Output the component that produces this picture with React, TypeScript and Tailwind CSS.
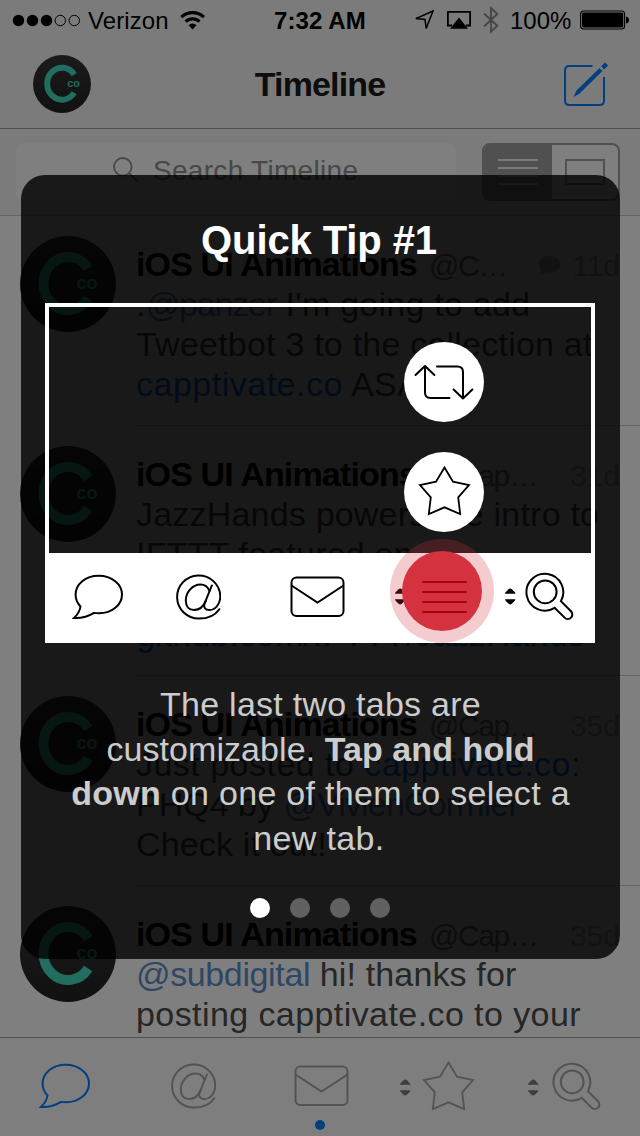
import type { ReactNode } from "react";

function Avatar({ className }: { className: string }) {
  return (
    <svg viewBox="0 0 96 96" className={className}>
      <defs>
        <linearGradient id="disc" x1="0" y1="0" x2="0" y2="1">
          <stop offset="0" stopColor="#363636" />
          <stop offset="1" stopColor="#222222" />
        </linearGradient>
      </defs>
      <circle cx="48" cy="48" r="48" fill="url(#disc)" />
      <path d="M68.2 32.5A24.5 26.5 0 1 0 68.2 62.5" fill="none" stroke="#42dabe" strokeWidth="9.8" />
      <text x="56.5" y="52.6" fontSize="18" fontWeight="700" fill="#42dabe" className="font-['Liberation_Sans']">
        co
      </text>
    </svg>
  );
}

function CommentIcon() {
  return (
    <svg width="52" height="46" fill="none" stroke="currentColor" strokeWidth="2">
      <path d="M8.5 32.5C5.4 29.2 3.6 25 3.6 20.7C3.6 10 13.5 1.7 26.6 1.7S50 10 50 20.5S40 39.3 27 39.3C25 39.3 23.5 39.3 22 38.9C17 42 10 44.4 2 44C5 41 8 37 8.5 32.5Z" />
    </svg>
  );
}

function AtIcon() {
  return (
    <svg width="45" height="46" fill="none" stroke="currentColor" strokeWidth="2" strokeLinecap="round">
      <path d="M43.3 35.2C39 41.5 31.5 44.6 23 44.6A21.6 21.6 0 1 1 44.3 22C44.3 30 39.5 36 33.5 36C29 36 27.3 33 28.6 29.5L35.8 11.5" />
      <path d="M33.6 17C31.5 12 28.5 10.5 24.5 10.5C16 10.5 9.8 19 9.8 26.5C9.8 32.5 13 36 18 36C23 36 27.5 32.5 30 26.5" />
    </svg>
  );
}

function MailIcon() {
  return (
    <svg width="55" height="42" fill="none" stroke="currentColor" strokeWidth="2">
      <rect x="1.5" y="1.5" width="52" height="38.4" rx="5" />
      <path d="M1.5 9.5L27.5 26.5L53.5 9.5" />
    </svg>
  );
}

function StarIcon() {
  return (
    <svg width="53" height="53" fill="none" stroke="currentColor" strokeWidth="1.8">
      <path d="M26.5 3.5L35 17.7L51 21L40.2 33.4L42.2 50L26.5 43.3L10.8 50L12.8 33.4L2 21L18 17.7Z" />
    </svg>
  );
}

function LensIcon() {
  return (
    <svg width="49" height="50" fill="none" stroke="currentColor" strokeWidth="2">
      <path d="M29.6 35.8A18.4 18.4 0 1 1 35.9 29.2L46 39.2a4.5 4.5 0 0 1-6.4 6.4Z" />
      <circle cx="20.2" cy="19.8" r="11.4" />
    </svg>
  );
}

function Stepper() {
  return (
    <svg width="11" height="17" fill="currentColor">
      <path d="M0 5.7Q0 4.8 0.8 4L3.6 1.2Q5.2 -0.3 6.8 1.2L9.6 4Q10.4 4.8 10.4 5.7Z" />
      <path d="M0 11.2Q0 12.100 0.8 12.900L3.6 15.700Q5.2 17.200 6.8 15.700L9.6 12.900Q10.4 12.100 10.4 11.200Z" />
    </svg>
  );
}

function StatusBar() {
  return (
    <div className="flex h-10 items-center text-[24px] text-black">
      <svg width="88" height="40" className="shrink-0">
        <g fill="currentColor">
          <circle cx="18.5" cy="20.5" r="5.7" />
          <circle cx="32.5" cy="20.5" r="5.7" />
          <circle cx="46.5" cy="20.5" r="5.7" />
        </g>
        <g fill="none" stroke="currentColor">
          <circle cx="60.3" cy="20.5" r="5.2" />
          <circle cx="74.3" cy="20.5" r="5.2" />
        </g>
      </svg>
      <span className="w-[92px] shrink-0 pt-[2px] whitespace-nowrap tracking-[0.1px]">Verizon</span>
      <svg width="26" height="20" className="mr-[68px] shrink-0" fill="none" stroke="currentColor" strokeWidth="3.2">
        <path d="M1.3 7.2A16.5 16.5 0 0 1 23.9 7.2" />
        <path d="M5.7 11.7A10 10 0 0 1 19.5 11.7" />
        <path d="M12.6 19.4L8.6 15.2A5.8 5.8 0 0 1 16.6 15.2Z" fill="currentColor" stroke="none" />
      </svg>
      <span className="w-[140px] shrink-0 pt-[2px] whitespace-nowrap font-bold tracking-[0.1px]">7:32 AM</span>
      <svg width="22" height="22" className="mr-[10px] shrink-0" fill="none" stroke="currentColor" strokeWidth="1.5">
        <path d="M19 2L1.8 9.6L11 10.4L12.2 19.5Z" strokeLinejoin="miter" />
      </svg>
      <svg width="26" height="20" className="mr-[11px] shrink-0">
        <path d="M6 15.5H1.9V1.9H24.1V15.5H20" fill="none" stroke="currentColor" strokeWidth="1.8" />
        <path d="M13 7.5L22 18.8H4Z" fill="currentColor" />
      </svg>
      <svg width="17" height="28" className="mr-[10px] shrink-0 text-[#8c8c8c]" fill="none" stroke="currentColor" strokeWidth="1.9">
        <path d="M1 7.5L14.3 19.8L8 25.5V2L14.3 8L1 20.5" />
      </svg>
      <span className="w-[70px] shrink-0 pt-[2px] whitespace-nowrap">100%</span>
      <svg width="50" height="20" className="shrink-0">
        <rect x="0.6" y="1" width="44" height="18" rx="3" fill="none" stroke="currentColor" strokeWidth="1.1" />
        <rect x="2" y="2.5" width="41.2" height="15" rx="1.4" fill="currentColor" />
        <path d="M46 6.5Q49 7 49 10T46 13.5Z" fill="currentColor" />
      </svg>
    </div>
  );
}

function NavBar() {
  return (
    <div className="grid h-[89px] grid-cols-[1fr_auto_1fr] items-center border-b border-[#a0a0a0]">
      <Avatar className="mb-px ml-[33px] h-[58px] w-[58px]" />
      <h1 className="pt-px text-[34px] font-bold tracking-[-0.85px] text-[#1a1a1a]">Timeline</h1>
      <svg width="46" height="46" className="mr-[31px] justify-self-end text-[#0080ff]" fill="none" stroke="currentColor" strokeWidth="2">
        <path d="M29.500 5H6.500Q2 5 2 9.500V39.500Q2 44 6.500 44H36.500Q41 44 41 39.500V16" />
        <path d="M15 31L38 8.500" strokeWidth="4.200" />
        <path d="M16.800 32.600L10.500 36L13.600 29.200Z" fill="currentColor" stroke="none" />
        <path d="M39.600 6.900L43.600 3" strokeWidth="4.400" />
      </svg>
    </div>
  );
}

function SearchRow() {
  return (
    <div className="flex h-[87px] items-start border-b border-[#c8c8c8] pt-[14px] pl-4">
      <div className="flex h-[58px] w-[440px] items-center rounded-lg bg-white pl-[97px] text-[28px] tracking-[0.3px] text-[#8e8e93]">
        <svg width="26" height="26" className="mr-[14px] mb-1" fill="none" stroke="currentColor" strokeWidth="1.8">
          <circle cx="9.8" cy="9.8" r="8.8" />
          <path d="M16 16L24.500 24.500" />
        </svg>
        <span className="pb-[2px]">Search Timeline</span>
      </div>
      <div className="ml-[26px] flex h-[58px] w-[138px] overflow-hidden rounded-lg border-2 border-[#a0a0a0] bg-white">
        <div className="flex w-[68px] items-center justify-center bg-[#a0a0a0]">
          <svg width="40" height="26" stroke="#f4f4f4" strokeWidth="2">
            <path d="M0 1H40M0 9H40M0 17H40M0 25H40" />
          </svg>
        </div>
        <div className="flex flex-1 items-center justify-center">
          <div className="h-[26px] w-10 border-2 border-[#a0a0a0]" />
        </div>
      </div>
    </div>
  );
}

function Tweet({ handle, age, reply, children, last }: { handle: string; age: string; reply?: boolean; children: ReactNode; last?: boolean }) {
  return (
    <article className="flex pl-5">
      <Avatar className="mt-5 h-24 w-24 shrink-0" />
      <div className={`ml-5 flex-1 whitespace-nowrap pt-7 text-[34px] leading-10 text-[#4c4c4c] ${last ? "" : "border-b border-[#c8c8c8] pb-[21px]"}`}>
        <div className="flex h-10 items-baseline text-[30px] text-[#7a7a7a]">
          <span className="w-[293px] text-[34px] font-bold tracking-[-0.85px] text-black">iOS UI Animations</span>
          <span className="tracking-[-1.4px]">{handle}</span>
          <span className="mr-5 ml-auto flex items-baseline text-[#b4b4b4]">
            {reply && (
              <svg width="23" height="21" className="mr-[11px]" fill="currentColor">
                <path d="M12 1C18 1 22.500 4.500 22.500 9.200S18 17.600 12 17.600Q10 17.600 8.500 17.200Q5 20.200 0.500 20Q3 18 3.300 14.700Q1 12.500 1 9.200C1 4.500 6 1 12 1Z" />
              </svg>
            )}
            {age}
          </span>
        </div>
        {children}
      </div>
    </article>
  );
}

function Timeline() {
  return (
    <main className="h-[821px] overflow-hidden bg-white">
      <Tweet handle="@C…" age="11d" reply>
        <div className="tracking-[0.25px]">
          .<span className="tracking-[-1.2px] text-[#5c8fc8]">@panzer</span> I'm going to add
        </div>
        <div className="tracking-[0.22px]">Tweetbot 3 to the collection at</div>
        <div className="tracking-[0.5px]">
          <span className="text-[#007aff]">capptivate.co</span> ASAP!
        </div>
      </Tweet>
      <Tweet handle="@Cap…" age="31d">
        <div className="tracking-[0.2px]">JazzHands powers the intro to</div>
        <div className="tracking-[0.2px]">IFTTT featured on</div>
        <div className="h-10" />
        <div className="tracking-[0.1px] text-[#007aff]">github.com/IFTTT/JazzHands</div>
      </Tweet>
      <Tweet handle="@Cap…" age="35d">
        <div className="tracking-[0.48px]">
          Just posted to <span className="text-[#007aff]">capptivate.co</span>:
        </div>
        <div>
          PHQ4 by <span className="tracking-[-0.85px] text-[#5c8fc8]">@VivienCormier</span>
        </div>
        <div className="tracking-[0.15px]">Check it out!</div>
      </Tweet>
      <Tweet handle="@Cap…" age="35d" last>
        <div className="tracking-[0.15px]">
          <span className="tracking-[-0.37px] text-[#5c8fc8]">@subdigital</span> hi! thanks for
        </div>
        <div className="tracking-[0.42px]">posting capptivate.co to your</div>
      </Tweet>
    </main>
  );
}

function TabBar() {
  return (
    <nav className="grid h-[99px] grid-cols-5 items-start border-t border-[#a0a0a0] bg-[#fcfcfc] text-[#a6a6a6]">
      <div className="flex justify-center pt-[25px] pl-[2px] text-[#0080ff]">
        <CommentIcon />
      </div>
      <div className="flex justify-center pt-[25px] pl-[3px]">
        <AtIcon />
      </div>
      <div className="flex flex-col items-center pt-[27px]">
        <div className="pl-[2px]">
          <MailIcon />
        </div>
        <span className="mt-[13px] h-[10px] w-[10px] rounded-full bg-[#0080ff]" />
      </div>
      <div className="grid grid-cols-[1fr_auto_1fr] pt-[21px]">
        <div className="mt-5 mr-[11px] justify-self-end text-[#7a7a7a]">
          <Stepper />
        </div>
        <StarIcon />
      </div>
      <div className="grid grid-cols-[1fr_auto_1fr] pt-[24px]">
        <div className="mt-[17px] mr-[13px] justify-self-end text-[#7a7a7a]">
          <Stepper />
        </div>
        <LensIcon />
      </div>
    </nav>
  );
}

function TabPicker() {
  return (
    <div className="relative ml-6 flex h-[340px] w-[550px] flex-col">
      <div className="flex flex-1 flex-col gap-[30px] border-x-4 border-t-4 border-white pt-[35px] pl-[355px]">
        <div className="flex h-20 w-20 items-center justify-center rounded-full bg-white">
          <svg width="60" height="37" fill="none" stroke="#000" strokeWidth="2" strokeLinecap="round" strokeLinejoin="round">
            <path d="M1.500 11L11 2L20.400 11M11 2V28.500Q11 34 16.500 34H35.500" />
            <path d="M23 2.500H43.500Q49 2.500 49 8V34.500M39.600 25.500L49 34.500L58.400 25.500" />
          </svg>
        </div>
        <div className="flex h-20 w-20 items-center justify-center rounded-full bg-white pb-[3px] text-black">
          <StarIcon />
        </div>
      </div>
      <div className="flex h-[90px] items-center bg-white pb-[3px] pl-[27px] text-black">
        <CommentIcon />
        <span className="ml-[52px]">
          <AtIcon />
        </span>
        <span className="ml-[69px]">
          <MailIcon />
        </span>
        <span className="ml-[50px]">
          <Stepper />
        </span>
        <svg width="45" height="34" className="relative z-10 ml-4 shrink-0" stroke="#ab0011" strokeWidth="2" strokeLinecap="round">
          <path d="M1 2H44M1 12H44M1 22H44M1 32H44" />
        </svg>
        <span className="ml-[38px]">
          <Stepper />
        </span>
        <span className="ml-[9px]">
          <LensIcon />
        </span>
      </div>
      <div className="absolute top-[236px] left-[345px] flex h-[104px] w-[104px] items-center justify-center rounded-full bg-[#d5323f]/25">
        <div className="h-20 w-20 rounded-full bg-[#d5323f]" />
      </div>
    </div>
  );
}

function TipCard() {
  return (
    <section className="absolute top-[175px] left-[21px] h-[784px] w-[599px] rounded-[24px] bg-black/80 pt-[42px]">
      <h2 className="pr-[3px] text-center text-[40px] leading-[46px] font-bold tracking-[-0.1px] text-white">Quick Tip #1</h2>
      <div className="mt-10">
        <TabPicker />
      </div>
      <div className="mt-[39px] text-center text-[34px] leading-[44.500px] whitespace-nowrap text-[#cccccc]">
        <div className="tracking-[0.25px]">The last two tabs are</div>
        <div className="tracking-[0.07px]">
          customizable. <b>Tap and hold</b>
        </div>
        <div className="tracking-[0.3px]">
          <b>down</b> on one of them to select a
        </div>
        <div className="pr-[3px] tracking-[0.35px]">new tab.</div>
      </div>
      <div className="mt-[38px] flex justify-center gap-5 pr-px">
        <span className="h-5 w-5 rounded-full bg-white" />
        <span className="h-5 w-5 rounded-full bg-[#606060]" />
        <span className="h-5 w-5 rounded-full bg-[#606060]" />
        <span className="h-5 w-5 rounded-full bg-[#606060]" />
      </div>
    </section>
  );
}

export default function App() {
  return (
    <div className="relative h-[1136px] w-[640px] overflow-hidden bg-[#f6f6f6] font-['Liberation_Sans',Arial,sans-serif]">
      <StatusBar />
      <NavBar />
      <SearchRow />
      <Timeline />
      <TabBar />
      <div className="absolute inset-0 bg-black/50" />
      <TipCard />
    </div>
  );
}
